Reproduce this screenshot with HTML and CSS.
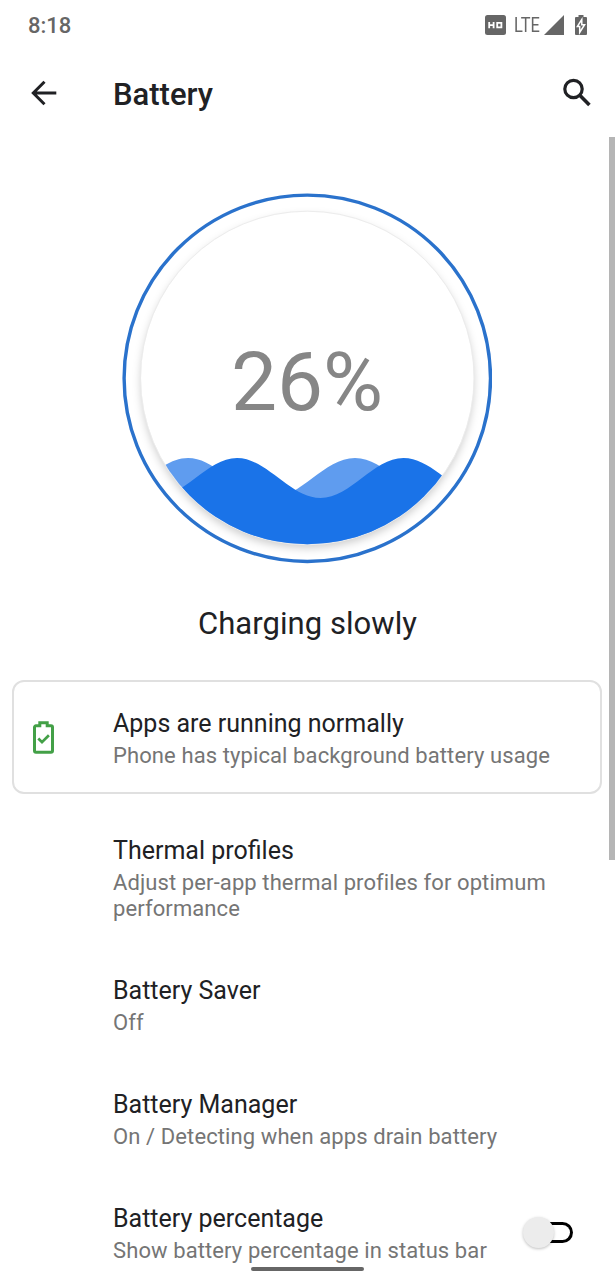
FILE: index.html
```html
<!DOCTYPE html>
<html lang="en">
<head>
    <meta charset="UTF-8">
    <meta name="viewport" content="width=device-width, initial-scale=1.0">
    <title>Battery</title>
    <link rel="stylesheet" href="styles.css">
</head>
<body>
    <div class="phone">
        <div class="status-bar">
            <span class="clock">8:18</span>
            <div class="status-icons">
                <svg class="hd" width="21" height="20" viewBox="0 0 21 20">
                    <rect width="21" height="20" rx="2.5" fill="#666"/>
                    <path d="M4.200 7v6.300M8.600 7v6.300M4.200 10.200h4.400M12.200 7.900h4.200v4.500h-4.200z" fill="none" stroke="#fff" stroke-width="1.800"/>
                </svg>
                <span class="lte">LTE</span>
                <svg class="signal" width="20" height="20" viewBox="0 0 20 20">
                    <path d="M0 20L20 0V20z" fill="#666"/>
                </svg>
                <svg class="battery" width="12" height="20" viewBox="0 0 12 20">
                    <path d="M3.5 0h5v2H11a1 1 0 0 1 1 1v16a1 1 0 0 1-1 1H1a1 1 0 0 1-1-1V3a1 1 0 0 1 1-1h2.5z" fill="#666"/>
                    <path d="M6.8 4.500L2.400 11.400h2.300v6.100l4.900-7.800H6.800z" fill="#666" stroke="#fff" stroke-width="1.500"/>
                </svg>
            </div>
        </div>

        <header class="app-bar">
            <svg class="back" width="28" height="28" viewBox="0 0 28 28">
                <path d="M26.300 14H3.500M14.500 2.800L3.300 14l11.200 11.200" fill="none" stroke="#202124" stroke-width="3"/>
            </svg>
            <h1>Battery</h1>
            <svg class="search" width="30" height="30" viewBox="0 0 30 30">
                <circle cx="11.5" cy="11" r="8.7" fill="none" stroke="#202124" stroke-width="3.2"/>
                <path d="M17.8 17.3L27.4 26.9" stroke="#202124" stroke-width="3.6"/>
            </svg>
        </header>

        <main class="content">
            <div class="gauge">
                <svg width="370" height="371" viewBox="0 0 370 371">
                    <defs>
                        <clipPath id="dial"><circle cx="185.3" cy="185" r="166.3"/></clipPath>
                        <filter id="shadow" x="-10%" y="-10%" width="120%" height="120%">
                            <feDropShadow dx="0" dy="4" stdDeviation="4.5" flood-color="#000" flood-opacity=".2"/>
                        </filter>
                    </defs>
                    <circle cx="185.3" cy="185.3" r="183.2" fill="none" stroke="#2a72cc" stroke-width="3.4"/>
                    <circle cx="185.3" cy="185" r="166.3" fill="#fff" filter="url(#shadow)"/>
                    <circle cx="185.3" cy="185" r="166.8" fill="none" stroke="#ececec" stroke-width="1"/>
                    <g clip-path="url(#dial)">
                        <path d="M-17 305C13 305 36 265 66 265S119 305 149 305S202 265 233 265S285 305 315 305L370 371H0z" fill="#5f9cef"/>
                        <path d="M32 305C62 305 85 265 115 265S168 305 198.500 305S251 265 281.500 265S335 305 365 305V371H0V305z" fill="#1a73e8"/>
                    </g>
                </svg>
                <span class="percent">26%</span>
            </div>
            <p class="charge-state">Charging slowly</p>

            <section class="tip-card">
                <svg class="tip-icon" width="21" height="33" viewBox="0 0 21 33">
                    <path d="M6.800 1.700h7.400v3.100H18a1.500 1.500 0 0 1 1.500 1.500v23.500a1.500 1.500 0 0 1-1.500 1.500H3a1.500 1.500 0 0 1-1.500-1.500V6.300A1.500 1.500 0 0 1 3 4.800h3.800z" fill="none" stroke="#43a047" stroke-width="3"/>
                    <path d="M5.300 17.500l3.700 3.700 6.900-6.900" fill="none" stroke="#43a047" stroke-width="2.700"/>
                </svg>
                <div class="text">
                    <h2>Apps are running normally</h2>
                    <p>Phone has typical background battery usage</p>
                </div>
            </section>

            <div class="settings">
                <div class="item">
                    <h2>Thermal profiles</h2>
                    <p>Adjust per-app thermal profiles for optimum performance</p>
                </div>
                <div class="item">
                    <h2>Battery Saver</h2>
                    <p>Off</p>
                </div>
                <div class="item">
                    <h2>Battery Manager</h2>
                    <p>On / Detecting when apps drain battery</p>
                </div>
                <div class="item with-switch">
                    <div class="text">
                        <h2>Battery percentage</h2>
                        <p>Show battery percentage in status bar</p>
                    </div>
                    <div class="switch"><span class="thumb"></span></div>
                </div>
            </div>
        </main>
        <div class="scrollbar"></div>
        <div class="home-pill"></div>
    </div>
</body>
</html>
```
FILE: styles.css
```css
* {
    box-sizing: border-box;
    margin: 0;
    padding: 0;
}
body {
    font-family: Roboto, sans-serif;
    background: #fff;
    color: #202124;
}
svg {
    display: block;
}
.phone {
    position: relative;
    width: 615px;
    height: 1280px;
    overflow: hidden;
}
.status-bar {
    display: flex;
    justify-content: space-between;
    align-items: center;
    height: 49px;
    padding: 0 28px;
    color: #666;
}
.clock {
    font-size: 22px;
    font-weight: 500;
    padding-top: 2px;
}
.status-icons {
    display: flex;
    align-items: center;
}
.lte {
    width: 27px;
    margin: 0 3px 0 8px;
    font-size: 20px;
    transform: scaleX(0.82);
    transform-origin: left;
}
.battery {
    margin-left: 11px;
}
.app-bar {
    display: flex;
    align-items: center;
    height: 88px;
    padding: 0 23px 0 30px;
}
.app-bar h1 {
    flex: 1;
    margin-left: 55px;
    padding-top: 2px;
    font-size: 31px;
    font-weight: 500;
}
.gauge {
    display: grid;
    place-items: center;
    width: 370px;
    height: 371px;
    margin: 56px 0 0 122px;
}
.gauge > * {
    grid-area: 1 / 1;
}
.percent {
    padding-top: 7px;
    font-size: 82px;
    color: #868686;
}
.charge-state {
    margin-top: 40px;
    font-size: 31px;
    line-height: 40px;
    letter-spacing: 0.05px;
    text-align: center;
}
.tip-card {
    display: flex;
    align-items: center;
    width: 590px;
    height: 114px;
    margin: 36px 0 0 12px;
    padding: 2px 0 0 19px;
    border: 2px solid #e0e0e0;
    border-radius: 12px;
}
.tip-icon {
    margin-bottom: 2px;
}
.tip-card .text {
    margin-left: 59px;
}
h2 {
    font-size: 25px;
    font-weight: 400;
    line-height: 34px;
}
.text p,
.item p {
    padding-top: 2px;
    font-size: 22px;
    line-height: 26px;
    letter-spacing: 0.1px;
    color: #757575;
}
.settings {
    display: flex;
    flex-direction: column;
    gap: 52px;
    padding: 40px 42px 0 113px;
}
.with-switch {
    display: flex;
    justify-content: space-between;
    align-items: center;
    white-space: nowrap;
}
.switch {
    position: relative;
    width: 42px;
    height: 21px;
    margin-bottom: 2px;
    border: 3px solid #000;
    border-left: none;
    border-radius: 0 11px 11px 0;
}
.thumb {
    position: absolute;
    left: -8px;
    top: -8px;
    width: 31px;
    height: 31px;
    border-radius: 50%;
    background: #ececec;
    box-shadow: 0 1px 3px rgba(0, 0, 0, 0.25);
}
.scrollbar {
    position: absolute;
    top: 137px;
    right: 0;
    width: 6px;
    height: 723px;
    background: #b5b5b5;
}
.home-pill {
    position: absolute;
    left: 251px;
    bottom: 9px;
    width: 113px;
    height: 4px;
    border-radius: 2px;
    background: #666;
}
```
